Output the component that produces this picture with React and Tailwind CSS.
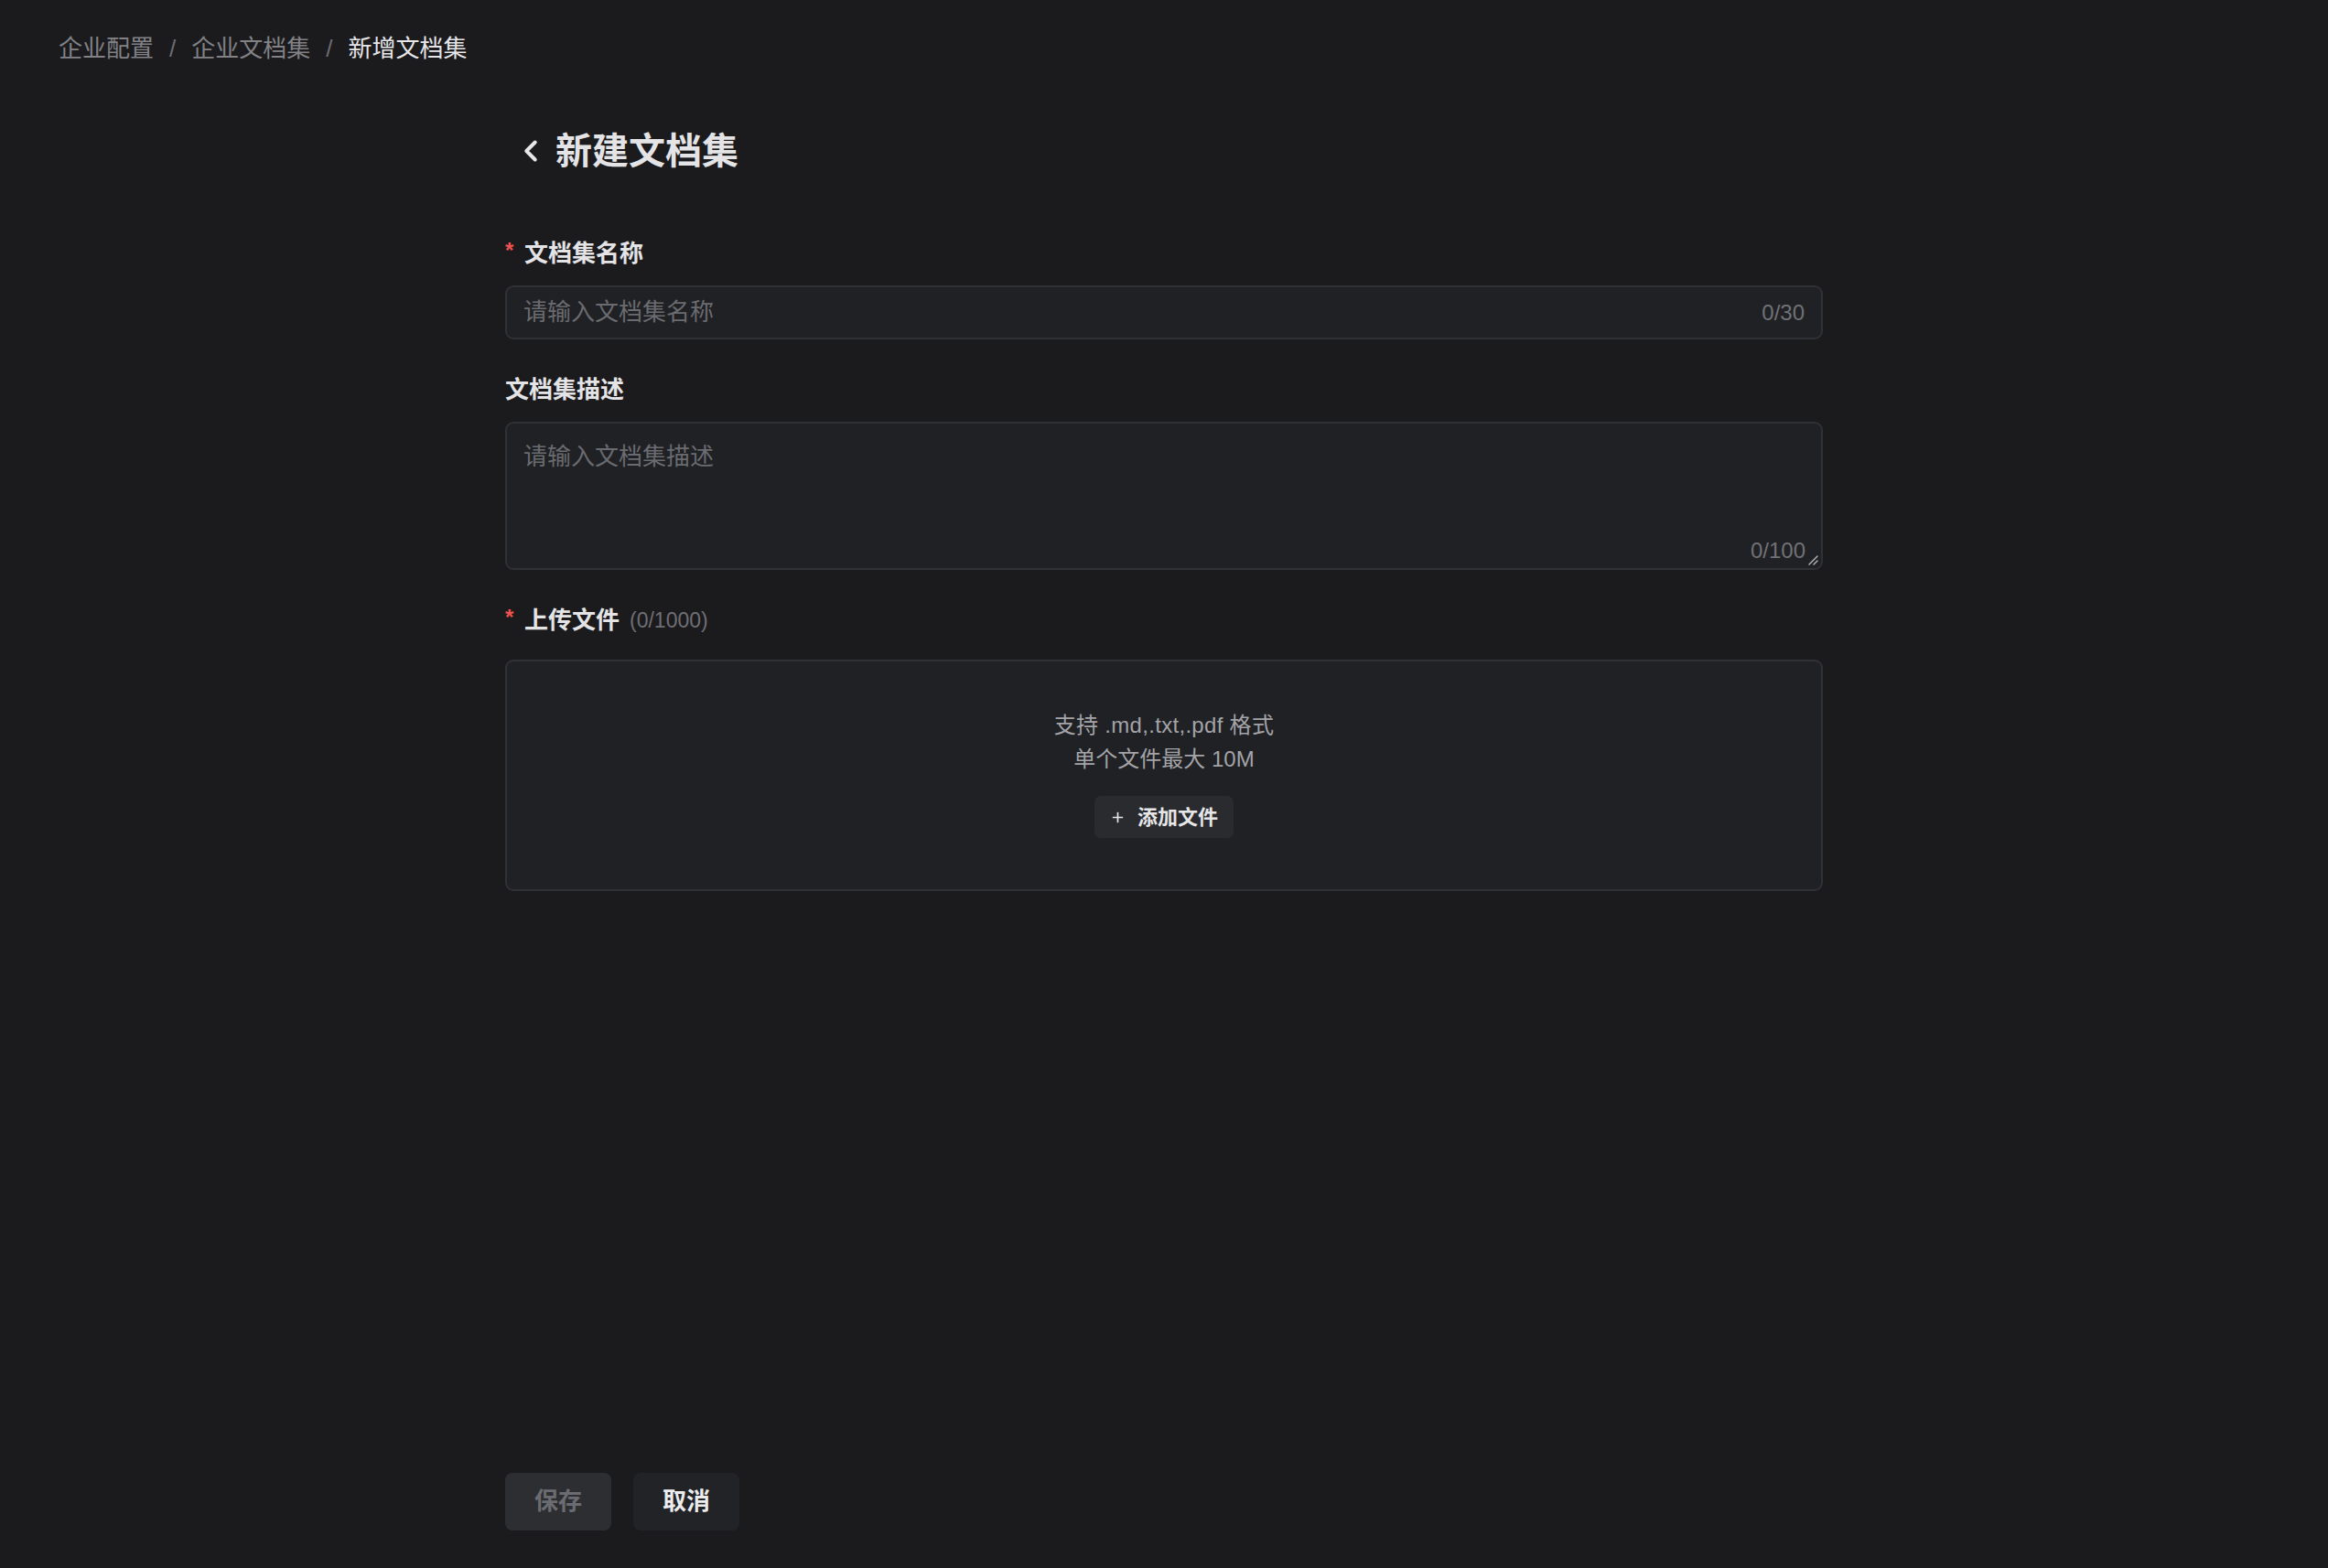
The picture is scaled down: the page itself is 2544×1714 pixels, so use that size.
import React, { useState } from "react";
import { ChevronLeft, Plus } from "lucide-react";

const FONT = "font-['Liberation_Sans','Noto_Sans_CJK_SC',sans-serif]";

const Breadcrumb = ({ items }) => (
  <nav className="flex items-center pl-16 pt-[38px] text-[26px] leading-[30px]">
    {items.map((item, i) => {
      const last = i === items.length - 1;
      return (
        <React.Fragment key={item}>
          <span className={last ? "text-[#e6e6e8]" : "text-[#818186]"}>{item}</span>
          {!last && <span className="mx-[17px] text-[#6c6c71]">/</span>}
        </React.Fragment>
      );
    })}
  </nav>
);

const FieldLabel = ({ required, children, extra }) => (
  <div className="flex items-center h-8 leading-8">
    {required && (
      <span className="w-[21px] text-[24px] font-bold text-[#f0524f] -translate-y-[3px]">*</span>
    )}
    <span className="text-[26px] font-bold text-[#e4e4e7]">{children}</span>
    {extra && <span className="ml-[11px] text-[23px] text-[#6f6f74]">{extra}</span>}
  </div>
);

export default function App() {
  const [name, setName] = useState("");
  const [desc, setDesc] = useState("");

  return (
    <div className={`h-screen bg-[#1b1b1d] flex flex-col ${FONT}`}>
      <Breadcrumb items={["企业配置", "企业文档集", "新增文档集"]} />

      <div className="w-[1440px] mx-auto flex-1 flex flex-col">
        {/* page title */}
        <div className="flex items-center h-12 mt-[73px] pl-[9px]">
          <ChevronLeft size={38} strokeWidth={2.5} className="text-[#e6e6e8]" />
          <h1 className="ml-[8px] text-[40px] leading-[48px] font-bold text-[#e4e4e7]">新建文档集</h1>
        </div>

        {/* name */}
        <div className="mt-[72px]">
          <FieldLabel required>文档集名称</FieldLabel>
        </div>
        <div className="mt-[19px] h-[59px] flex items-center rounded-[9px] border-2 border-[#303135] bg-[#202124] px-[18px]">
          <input
            value={name}
            maxLength={30}
            onChange={(e) => setName(e.target.value)}
            placeholder="请输入文档集名称"
            className="flex-1 bg-transparent outline-none text-[26px] text-[#e4e4e7] placeholder:text-[#6a6b70]"
          />
          <span className="text-[24px] text-[#707176]">{name.length}/30</span>
        </div>

        {/* description */}
        <div className="mt-[39px]">
          <FieldLabel>文档集描述</FieldLabel>
        </div>
        <div className="relative mt-[19px] h-[162px] rounded-[9px] border-2 border-[#303135] bg-[#202124]">
          <textarea
            value={desc}
            maxLength={100}
            onChange={(e) => setDesc(e.target.value)}
            placeholder="请输入文档集描述"
            className="w-full h-full resize-none bg-transparent outline-none px-[18px] pt-[18px] text-[26px] leading-9 text-[#e4e4e7] placeholder:text-[#6a6b70]"
          />
          <span className="absolute right-[17px] bottom-[5px] text-[24px] leading-7 text-[#707176]">
            {desc.length}/100
          </span>
          <svg className="absolute right-[3px] bottom-[3px]" width="12" height="12" viewBox="0 0 12 12">
            <path d="M11 2L2 11M11 7L7 11" stroke="#b8b8bc" strokeWidth="1.4" strokeLinecap="round" />
          </svg>
        </div>

        {/* upload */}
        <div className="mt-[39px]">
          <FieldLabel required extra="(0/1000)">上传文件</FieldLabel>
        </div>
        <div className="mt-[27px] h-[253px] rounded-[9px] border-2 border-[#303135] bg-[#202124] flex flex-col items-center pt-[51px]">
          <p className="text-[24px] leading-[37px] text-[#a3a3a8] tracking-[0.3px]">支持 .md,.txt,.pdf 格式</p>
          <p className="text-[24px] leading-[37px] text-[#a3a3a8]">单个文件最大 10M</p>
          <button className="mt-[22px] h-[46px] w-[152px] flex items-center justify-center gap-[13px] rounded-[7px] bg-[#2a2b2e] text-[#e6e6e8]">
            <Plus size={17} strokeWidth={2.4} />
            <span className="text-[22px] font-bold">添加文件</span>
          </button>
        </div>

        {/* footer actions */}
        <div className="mt-auto pb-[41px] flex gap-[24px]">
          <button
            disabled
            className="h-[63px] w-[116px] rounded-[8px] bg-[#2d2e32] text-[26px] font-bold text-[#6b6c71]"
          >
            保存
          </button>
          <button className="h-[63px] w-[116px] rounded-[8px] bg-[#222326] text-[26px] font-bold text-[#ececee]">
            取消
          </button>
        </div>
      </div>
    </div>
  );
}
